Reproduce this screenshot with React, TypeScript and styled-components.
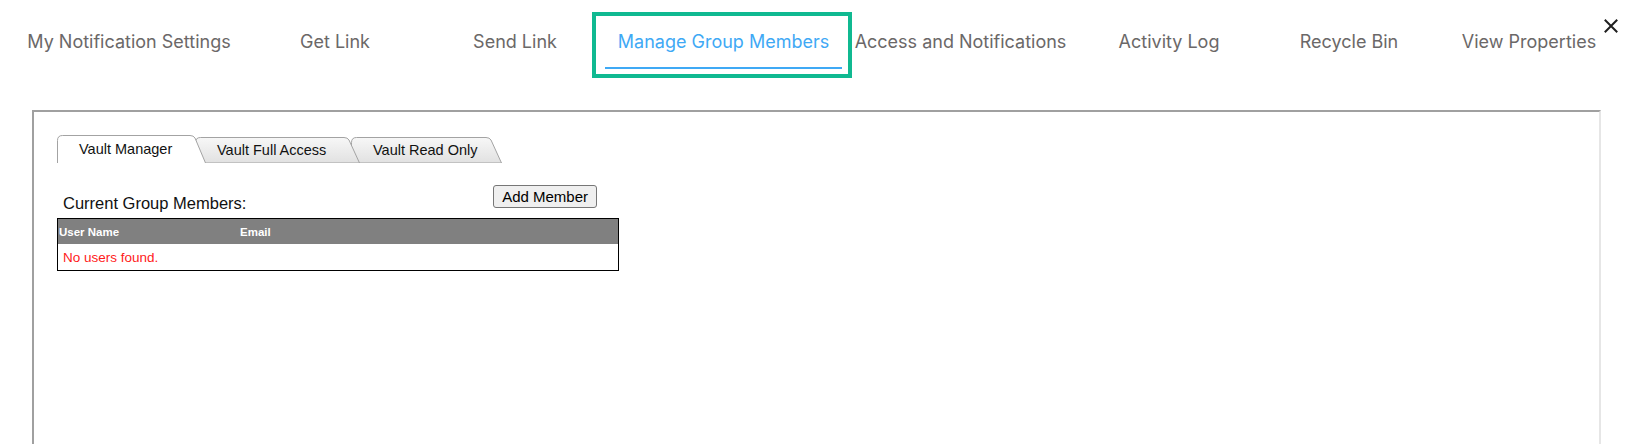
import React, { useId } from "react";
import styled, { createGlobalStyle } from "styled-components";

const GlobalStyle = createGlobalStyle`
  html, body {
    margin: 0;
    padding: 0;
    background: #ffffff;
    overflow: hidden;
  }
`;

const Page = styled.div`
  position: relative;
  width: 1633px;
  height: 444px;
  overflow: hidden;
  background: #fff;
`;

const CloseButton = styled.button`
  position: absolute;
  top: 19px;
  right: 15px;
  width: 14px;
  height: 14px;
  padding: 0;
  border: none;
  background: transparent;
  display: flex;
  cursor: pointer;
`;

const TabBar = styled.nav`
  display: flex;
  padding: 12px 14px 0 13px;
`;

const TopTab = styled.div<{ $w: number; $active?: boolean }>`
  position: relative;
  flex: none;
  width: ${(p) => p.$w}px;
  height: 57px;
  box-sizing: border-box;
  display: flex;
  align-items: center;
  justify-content: center;
  padding-top: 3px;
  border-bottom: 2px solid ${(p) => (p.$active ? "#3fa9f5" : "transparent")};
  font-family: Inter, "Noto Sans", sans-serif;
  font-size: 18px;
  color: ${(p) => (p.$active ? "#3fa9f5" : "#6b6868")};
  white-space: nowrap;
  cursor: pointer;
`;

const Highlight = styled.span`
  position: absolute;
  left: -13px;
  right: -10px;
  top: 0;
  bottom: -11px;
  border: 4px solid #10b991;
  pointer-events: none;
`;

const Frame = styled.div`
  margin: 41px 32px 0;
  height: 360px;
  border-style: solid;
  border-width: 2px;
  border-color: #a0a0a0 #e6e6e6 #e6e6e6 #a0a0a0;
  padding: 23px 0 0 23px;
  font-family: "Liberation Sans", Arial, sans-serif;
`;

const SubTabStrip = styled.div`
  display: flex;
  align-items: flex-end;
  height: 28px;
`;

const SubTab = styled.div<{ $w: number; $h: number; $z: number; $overlap: number }>`
  position: relative;
  z-index: ${(p) => p.$z};
  flex: none;
  width: ${(p) => p.$w}px;
  height: ${(p) => p.$h}px;
  margin-left: ${(p) => -p.$overlap}px;
  box-sizing: border-box;
  display: flex;
  align-items: center;
  padding-left: 22px;
  font-size: 14.5px;
  color: #111;
  white-space: nowrap;
  cursor: pointer;

  & > svg {
    position: absolute;
    left: 0;
    top: 0;
    z-index: 0;
  }
  & > span {
    position: relative;
    z-index: 1;
  }
`;

const MembersBlock = styled.div`
  width: 562px;
`;

const MembersHeader = styled.div`
  display: flex;
  justify-content: space-between;
  align-items: flex-start;
  height: 33px;
  margin-top: 22px;
`;

const MembersLabel = styled.div`
  margin-top: 9px;
  padding-left: 6px;
  font-size: 16.5px;
  line-height: 19px;
  color: #111;
`;

const AddButton = styled.button`
  margin-right: 22px;
  height: 23px;
  padding: 0 8px;
  border: 1px solid #767676;
  border-radius: 3px;
  background: #efefef;
  font-family: "Liberation Sans", Arial, sans-serif;
  font-size: 15px;
  color: #000;
  cursor: pointer;
`;

const MembersTable = styled.table`
  width: 562px;
  border-collapse: collapse;
  border: 1px solid #000;
`;

const HeadCell = styled.th<{ $w?: number }>`
  width: ${(p) => (p.$w ? `${p.$w}px` : "auto")};
  height: 25px;
  padding: 0 0 0 1px;
  background: #808080;
  color: #fff;
  font-size: 11.5px;
  font-weight: bold;
  text-align: left;
  vertical-align: middle;
`;

const EmptyCell = styled.td`
  height: 26px;
  padding: 0 0 0 5px;
  color: #ff1a1a;
  font-size: 13.5px;
  vertical-align: middle;
`;

const topTabs = [
  { label: "My Notification Settings", w: 232 },
  { label: "Get Link", w: 180 },
  { label: "Send Link", w: 180 },
  { label: "Manage Group Members", w: 237, active: true },
  { label: "Access and Notifications", w: 237 },
  { label: "Activity Log", w: 180 },
  { label: "Recycle Bin", w: 180 },
  { label: "View Properties", w: 180 },
];

const subTabs = [
  { label: "Vault Manager", w: 149, active: true, overlap: 0, z: 5 },
  { label: "Vault Full Access", w: 165, active: false, overlap: 11, z: 2 },
  { label: "Vault Read Only", w: 151, active: false, overlap: 9, z: 1 },
];

function TabShape({ w, h, active }: { w: number; h: number; active: boolean }) {
  const id = useId().replace(/:/g, "");
  const s = 12;
  const top = `M0.5 ${h} L0.5 5.5 Q0.5 0.5 5.5 0.5 L${w - s - 4} 0.5 Q${w - s - 0.5} 0.5 ${w - s + 1} 3 L${w - 0.5} ${h}`;
  return (
    <svg width={w} height={h} viewBox={`0 0 ${w} ${h}`}>
      <defs>
        <linearGradient id={`g${id}`} x1="0" y1="0" x2="0" y2="1">
          <stop offset="0" stopColor="#f7f7f7" />
          <stop offset="1" stopColor="#e1e1e1" />
        </linearGradient>
      </defs>
      <path d={`${top} Z`} fill={active ? "#ffffff" : `url(#g${id})`} stroke="none" />
      <path d={active ? top : `${top} Z`} fill="none" stroke="#a3a3a3" strokeWidth="1" />
    </svg>
  );
}

export default function App() {
  return (
    <Page>
      <GlobalStyle />
      <CloseButton aria-label="Close">
        <svg width="14" height="14" viewBox="0 0 14 14">
          <path d="M1.5 1.5 L12.5 12.5 M12.5 1.5 L1.5 12.5" stroke="#1f1f1f" strokeWidth="2" strokeLinecap="square" />
        </svg>
      </CloseButton>
      <TabBar>
        {topTabs.map((t) => (
          <TopTab key={t.label} $w={t.w} $active={t.active}>
            {t.label}
            {t.active && <Highlight />}
          </TopTab>
        ))}
      </TabBar>
      <Frame>
        <SubTabStrip>
          {subTabs.map((t) => {
            const h = t.active ? 28 : 26;
            return (
              <SubTab key={t.label} $w={t.w} $h={h} $z={t.z} $overlap={t.overlap}>
                <TabShape w={t.w} h={h} active={t.active} />
                <span>{t.label}</span>
              </SubTab>
            );
          })}
        </SubTabStrip>
        <MembersBlock>
          <MembersHeader>
            <MembersLabel>Current Group Members:</MembersLabel>
            <AddButton>Add Member</AddButton>
          </MembersHeader>
          <MembersTable>
            <thead>
              <tr>
                <HeadCell $w={180}>User Name</HeadCell>
                <HeadCell>Email</HeadCell>
              </tr>
            </thead>
            <tbody>
              <tr>
                <EmptyCell colSpan={2}>No users found.</EmptyCell>
              </tr>
            </tbody>
          </MembersTable>
        </MembersBlock>
      </Frame>
    </Page>
  );
}
